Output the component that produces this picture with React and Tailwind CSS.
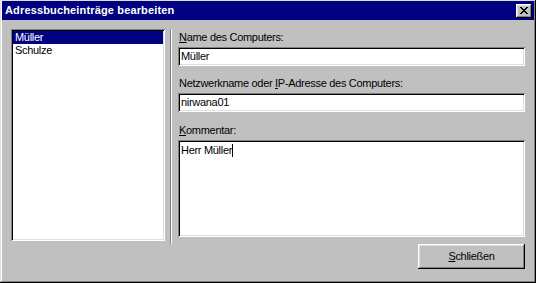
import React from 'react';

// Win98-Bevels als Schatten
const raised = 'shadow-[inset_-1px_-1px_#000,inset_1px_1px_#dfdfdf,inset_-2px_-2px_#808080,inset_2px_2px_#fff]';
const button = 'shadow-[inset_-1px_-1px_#000,inset_1px_1px_#fff,inset_-2px_-2px_#808080,inset_2px_2px_#dfdfdf]';
const sunken = 'shadow-[inset_1px_1px_#808080,inset_-1px_-1px_#fff,inset_2px_2px_#000,inset_-2px_-2px_#dfdfdf]';

const Field = ({ accessKey, rest, pre = '', value }) => (
  <div className="flex flex-col">
    <label className="h-[13px] leading-[13px] pl-[1px]">
      {pre}<span className="underline">{accessKey}</span>{rest}
    </label>
    <div className={`mt-[3px] h-[19px] bg-white ${sunken} px-[3px] pt-[3px] leading-[13px]`}>
      {value}
    </div>
  </div>
);

export default function App() {
  return (
    <div
      className={`w-[536px] h-[283px] bg-[#c0c0c0] ${raised} px-[2px] pt-[1px] pb-[2px] flex flex-col text-[11px] tracking-[-0.3px] text-black`}
      style={{ fontFamily: '"Liberation Sans", Arial, sans-serif' }}
    >
      <div className="h-[19px] bg-[#000080] flex items-center justify-between pl-[3px] pr-[2px]">
        <span className="text-white font-bold text-[11px] tracking-[0.15px] leading-none">Adressbucheinträge bearbeiten</span>
        <div className={`w-[16px] h-[14px] bg-[#c0c0c0] ${button} flex items-center justify-center`}>
          <svg width="8" height="7" viewBox="0 0 8 7" shapeRendering="crispEdges">
            <path d="M0 0h2v1H0zM6 0h2v1H6zM1 1h2v1H1zM5 1h2v1H5zM2 2h4v1H2zM3 3h2v1H3zM2 4h4v1H2zM1 5h2v1H1zM5 5h2v1H5zM0 6h2v1H0zM6 6h2v1H6z" fill="#000" />
          </svg>
        </div>
      </div>

      <div className="flex flex-1 pt-[9px] pl-[9px] pr-[9px]">
        <div className={`w-[154px] h-[212px] bg-white ${sunken} p-[2px]`}>
          <div className="h-[13px] bg-[#000080] text-white pl-[2px] leading-[13px]">Müller</div>
          <div className="h-[13px] pl-[2px] leading-[13px]">Schulze</div>
        </div>

        <div className="ml-[5px] w-[2px] h-[215px] border-l border-[#808080] bg-white"></div>

        <div className="ml-[6px] flex-1 flex flex-col">
          <div className="pt-[2px]">
            <Field accessKey="N" rest="ame des Computers:" value="Müller" />
          </div>
          <div className="mt-[11px]">
            <Field pre="Netzwerkname oder " accessKey="I" rest="P-Adresse des Computers:" value="nirwana01" />
          </div>
          <div className="mt-[12px] flex flex-col">
            <label className="h-[13px] leading-[13px] pl-[1px]">
              <span className="underline">K</span>ommentar:
            </label>
            <div className={`mt-[3px] h-[97px] bg-white ${sunken} px-[3px] pt-[4px] leading-[13px]`}>
              Herr Müller<span className="inline-block w-[1px] h-[13px] bg-black align-top"></span>
            </div>
          </div>
          <div className="flex justify-end mt-[7px]">
            <div className={`w-[107px] h-[25px] bg-[#c0c0c0] ${button} flex items-center justify-center`}>
              <span><span className="underline">S</span>chließen</span>
            </div>
          </div>
        </div>
      </div>
    </div>
  );
}
